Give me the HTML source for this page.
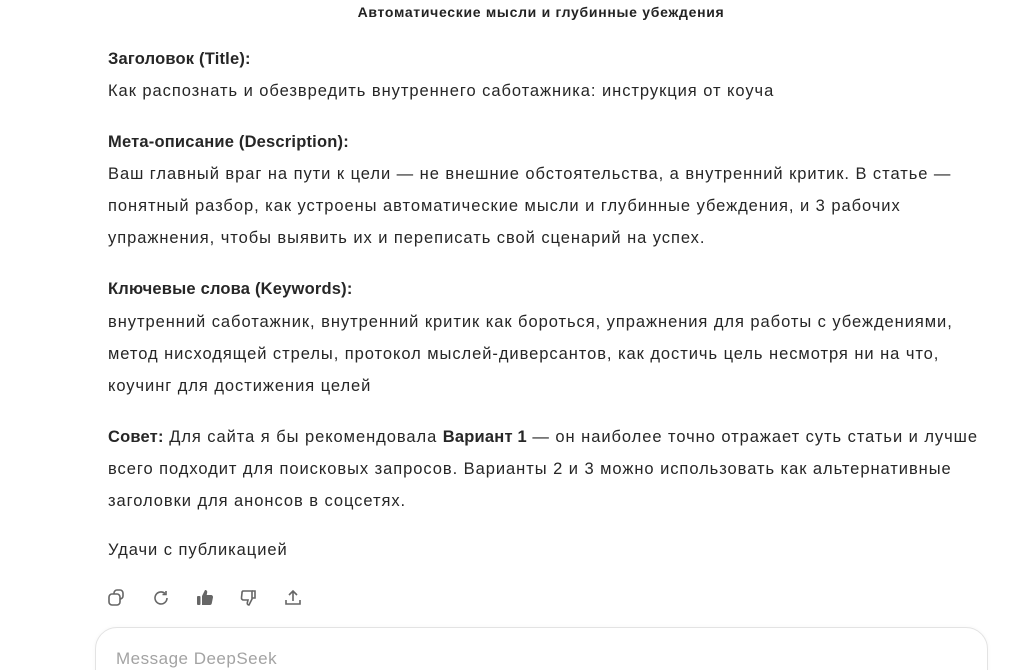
<!DOCTYPE html>
<html><head><meta charset="utf-8"><style>
html,body{margin:0;width:1024px;height:670px;overflow:hidden}
body{background:#fff;font-family:"Liberation Sans",sans-serif;color:#262626;position:relative}
.t{position:absolute;top:4px;left:0;width:1082px;text-align:center;font-size:14px;font-weight:bold;color:#222;letter-spacing:0.7px}
.l{position:absolute;left:108px;font-size:16.5px;letter-spacing:0.95px;white-space:nowrap;line-height:20px}
b{font-weight:bold;letter-spacing:0.2px}
.ic{position:absolute;top:588px}
.box{position:absolute;left:95px;top:627px;width:891px;height:80px;border:1px solid #e3e3e3;border-radius:22px;box-shadow:0 0 4px rgba(0,0,0,.04)}
.ph{position:absolute;left:116px;top:649px;font-size:17px;color:#a3a3a3;letter-spacing:0.5px}
</style></head><body>
<div class="t">Автоматические мысли и глубинные убеждения</div>
<div class="l" style="top:49px"><b>Заголовок (Title):</b></div>
<div class="l" style="top:81px">Как распознать и обезвредить внутреннего саботажника: инструкция от коуча</div>
<div class="l" style="top:132px"><b>Мета-описание (Description):</b></div>
<div class="l" style="top:164px">Ваш главный враг на пути к цели — не внешние обстоятельства, а внутренний критик. В статье —</div>
<div class="l" style="top:196px">понятный разбор, как устроены автоматические мысли и глубинные убеждения, и 3 рабочих</div>
<div class="l" style="top:228px">упражнения, чтобы выявить их и переписать свой сценарий на успех.</div>
<div class="l" style="top:279px"><b>Ключевые слова (Keywords):</b></div>
<div class="l" style="top:312px">внутренний саботажник, внутренний критик как бороться, упражнения для работы с убеждениями,</div>
<div class="l" style="top:344px">метод нисходящей стрелы, протокол мыслей-диверсантов, как достичь цель несмотря ни на что,</div>
<div class="l" style="top:376px">коучинг для достижения целей</div>
<div class="l" style="top:427px"><b>Совет:</b> Для сайта я бы рекомендовала <b>Вариант 1</b> — он наиболее точно отражает суть статьи и лучше</div>
<div class="l" style="top:459px">всего подходит для поисковых запросов. Варианты 2 и 3 можно использовать как альтернативные</div>
<div class="l" style="top:491px">заголовки для анонсов в соцсетях.</div>
<div class="l" style="top:540px">Удачи с публикацией</div>
<svg class="ic" style="left:107px" width="20" height="20" viewBox="0 0 20 20" fill="none" stroke="#666" stroke-width="1.6"><rect x="2" y="6" width="11" height="11" rx="3"/><path d="M7 6V5a3 3 0 0 1 3-3h3a3 3 0 0 1 3 3v3a3 3 0 0 1-3 3h-0"/></svg>
<svg class="ic" style="left:151px" width="20" height="20" viewBox="0 0 20 20" fill="none" stroke="#666" stroke-width="1.6"><path d="M16 10a6 6 0 1 1-2-4.5"/><path d="M15 3v3.5h-3.5"/></svg>
<svg class="ic" style="left:195px" width="20" height="20" viewBox="0 0 20 20" fill="#666"><rect x="2" y="8" width="3.5" height="9" rx="1"/><path d="M7 8l3-6c1.5 0 2.5 1 2.2 2.5L11.7 7H16a2 2 0 0 1 2 2.3l-1.2 6A2 2 0 0 1 14.8 17H7z"/></svg>
<svg class="ic" style="left:239px" width="20" height="20" viewBox="0 0 20 20" fill="none" stroke="#666" stroke-width="1.6"><path d="M4 3h9v8l-3 6c-1 0-2-1-1.7-2.2L9 12H4.5A2 2 0 0 1 2.5 9.7L3 5a2 2 0 0 1 1-2z"/><path d="M13 3h3v7h-3"/></svg>
<svg class="ic" style="left:283px" width="20" height="20" viewBox="0 0 20 20" fill="none" stroke="#666" stroke-width="1.6"><path d="M10 13V3M6 7l4-4 4 4M3 12v4h14v-4"/></svg>
<div class="box"></div>
<div class="ph">Message DeepSeek</div>
</body></html>
